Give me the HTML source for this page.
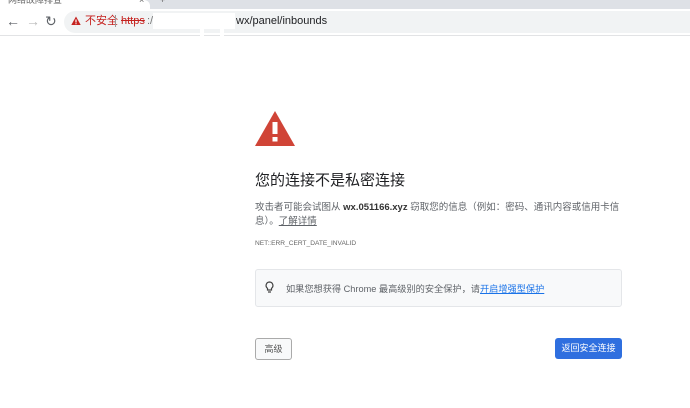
<!DOCTYPE html>
<html><head><meta charset="utf-8"><style>
body{margin:0;width:690px;height:408px;overflow:hidden;background:#fff;font-family:"Liberation Sans","Noto Sans CJK SC",sans-serif;position:relative}
.abs{position:absolute;white-space:nowrap}
</style></head><body>
<div class="abs" style="left:0;top:0;width:690px;height:9px;background:#dee1e6"></div>
<div class="abs" style="left:0;top:0;width:150px;height:10px;background:#fff;border-top-right-radius:6px"></div>
<div class="abs" style="left:8px;top:-5px;font-size:9px;line-height:10px;color:#666">网络故障排查</div>
<div class="abs" style="left:139px;top:-5px;font-size:9px;line-height:10px;color:#666">×</div>
<div class="abs" style="left:160px;top:-5px;font-size:9px;line-height:10px;color:#666">+</div>
<div class="abs" style="left:0;top:35px;width:690px;height:1px;background:#e2e3e5"></div>
<div class="abs" style="left:6px;top:14px;font-size:14px;line-height:14px;color:#5f6368">←</div>
<div class="abs" style="left:26px;top:14px;font-size:14px;line-height:14px;color:#bbb">→</div>
<div class="abs" style="left:45px;top:14px;font-size:14px;line-height:14px;color:#5f6368">↻</div>
<div class="abs" style="left:64px;top:11px;width:640px;height:22px;background:#f1f3f4;border-radius:11px"></div>
<svg class="abs" style="left:71px;top:16px" width="10" height="10" viewBox="0 0 10 10"><path d="M5 0.5L9.7 9H0.3Z" fill="#c5221f"/><rect x="4.4" y="3.5" width="1.2" height="3" fill="#fff"/><rect x="4.4" y="7.2" width="1.2" height="1" fill="#fff"/></svg>
<div class="abs" style="left:85px;top:15px;font-size:11px;line-height:12px;color:#c5221f">不安全</div>
<div class="abs" style="left:115px;top:15px;width:1px;height:12px;background:#999"></div>
<div class="abs" style="left:121px;top:15px;font-size:11px;line-height:12px;color:#c5221f;text-decoration:line-through">https</div>
<div class="abs" style="left:147px;top:15px;font-size:11px;line-height:12px;color:#777">:// v</div>
<div class="abs" style="left:236px;top:15px;font-size:11px;line-height:12px;color:#202124">wx/panel/inbounds</div>
<div class="abs" style="left:153px;top:13px;width:82px;height:16px;background:#fff"></div>
<div class="abs" style="left:200px;top:28px;width:4px;height:10px;background:#fff"></div>
<div class="abs" style="left:220px;top:28px;width:4px;height:10px;background:#fff"></div>
<svg class="abs" style="left:255px;top:111px" width="40" height="35" viewBox="0 0 40 35"><path d="M20 0L40 35H0Z" fill="#d04437"/><rect x="17.5" y="11" width="5" height="12" fill="#fff"/><rect x="17.5" y="26" width="5" height="4.5" fill="#fff"/></svg>
<div class="abs" style="left:255px;top:172px;font-size:15px;line-height:18px;color:#202124">您的连接不是私密连接</div>
<div class="abs" style="left:255px;top:201px;width:375px;white-space:normal;font-size:9.5px;line-height:14px;color:#5f6368">攻击者可能会试图从 <b style="color:#333">wx.051166.xyz</b> 窃取您的信息（例如：密码、通讯内容或信用卡信息）。<span style="text-decoration:underline">了解详情</span></div>
<div class="abs" style="left:255px;top:239px;font-size:6.6px;line-height:9px;color:#666">NET::ERR_CERT_DATE_INVALID</div>
<div class="abs" style="left:255px;top:269px;width:365px;height:36px;background:#f8f9fa;border:1px solid #e4e6e9;border-radius:3px"></div>
<svg class="abs" style="left:265px;top:281px" width="9" height="13" viewBox="0 0 9 13"><path d="M4.5 1a3.5 3.5 0 0 0-2 6.3V9h4V7.3A3.5 3.5 0 0 0 4.5 1ZM3 11h3" fill="none" stroke="#444" stroke-width="1.2"/></svg>
<div class="abs" style="left:286px;top:283px;font-size:9.2px;line-height:12px;color:#5f6368">如果您想获得 Chrome 最高级别的安全保护，请<span style="color:#1a73e8;text-decoration:underline">开启增强型保护</span></div>
<div class="abs" style="left:255px;top:338px;width:35px;height:20px;border:1px solid #aaa;border-radius:3px;background:#f8f9fa;font-size:9px;line-height:20px;text-align:center;color:#555">高级</div>
<div class="abs" style="left:555px;top:338px;width:67px;height:21px;background:#2f6fdf;border-radius:3px;font-size:9px;line-height:21px;text-align:center;color:#fff">返回安全连接</div>
</body></html>
